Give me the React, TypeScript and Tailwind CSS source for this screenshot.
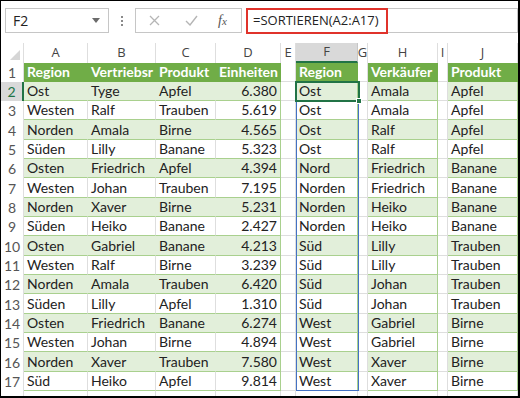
import React from 'react'

const colWidths = ['w-[64px]', 'w-[68px]', 'w-[60px]', 'w-[65px]', 'w-[15px]', 'w-[62px]', 'w-[10px]', 'w-[70px]', 'w-[10px]', 'w-[70px]']
const colLetters = ['A', 'B', 'C', 'D', 'E', 'F', 'G', 'H', 'I', 'J']
// which columns belong to a table, and which are the last column of their table
const inTable = [true, true, true, true, false, true, false, true, false, true]
const lastOfTable = [false, false, false, true, false, true, false, true, false, true]
const numeric = [false, false, false, true, false, false, false, false, false, false]

const left = [
  ['Ost', 'Tyge', 'Apfel', '6.380'],
  ['Westen', 'Ralf', 'Trauben', '5.619'],
  ['Norden', 'Amala', 'Birne', '4.565'],
  ['Süden', 'Lilly', 'Banane', '5.323'],
  ['Osten', 'Friedrich', 'Apfel', '4.394'],
  ['Westen', 'Johan', 'Trauben', '7.195'],
  ['Norden', 'Xaver', 'Birne', '5.231'],
  ['Süden', 'Heiko', 'Banane', '2.427'],
  ['Osten', 'Gabriel', 'Banane', '4.213'],
  ['Westen', 'Ralf', 'Birne', '3.239'],
  ['Norden', 'Amala', 'Trauben', '6.420'],
  ['Süden', 'Lilly', 'Apfel', '1.310'],
  ['Osten', 'Friedrich', 'Banane', '6.274'],
  ['Westen', 'Johan', 'Birne', '4.894'],
  ['Norden', 'Xaver', 'Trauben', '7.580'],
  ['Süd', 'Heiko', 'Apfel', '9.814'],
]
const regions = ['Ost', 'Ost', 'Ost', 'Ost', 'Nord', 'Norden', 'Norden', 'Norden', 'Süd', 'Süd', 'Süd', 'Süd', 'West', 'West', 'West', 'West']
const sellers = ['Amala', 'Amala', 'Ralf', 'Ralf', 'Friedrich', 'Friedrich', 'Heiko', 'Heiko', 'Lilly', 'Lilly', 'Johan', 'Johan', 'Gabriel', 'Gabriel', 'Xaver', 'Xaver']
const products = ['Apfel', 'Apfel', 'Apfel', 'Apfel', 'Banane', 'Banane', 'Banane', 'Banane', 'Trauben', 'Trauben', 'Trauben', 'Trauben', 'Birne', 'Birne', 'Birne', 'Birne']

const rows: string[][] = [
  ['Region', 'Vertriebsr', 'Produkt', 'Einheiten', '', 'Region', '', 'Verkäufer', '', 'Produkt'],
  ...left.map((r, i) => [...r, '', regions[i], '', sellers[i], '', products[i]]),
]

function cellClass(row: number, col: number) {
  const table = inTable[col]
  if (table && row === 1) {
    return 'bg-[#70AD47] text-white font-bold border-r border-b border-r-[#70AD47] border-b-[#70AD47]'
  }
  if (table && row % 2 === 0) {
    return lastOfTable[col]
      ? 'bg-[#E2EFDA] border-r border-b border-r-[#A9D08E] border-b-[#A9D08E]'
      : 'bg-[#E2EFDA] border-r border-b border-r-[#E2EFDA] border-b-[#A9D08E]'
  }
  if (table) {
    return lastOfTable[col]
      ? 'bg-white border-r border-b border-r-[#A9D08E] border-b-[#A9D08E]'
      : 'bg-white border-r border-b border-r-[#dedede] border-b-[#A9D08E]'
  }
  return 'bg-white border-r border-b border-r-[#dedede] border-b-[#dedede]'
}

export default function App() {
  return (
    <div className="w-[520px] h-[398px] overflow-hidden bg-white border-t border-l border-r-2 border-b-2 border-black font-['Lato',sans-serif] text-[#222]">
      {/* Formula bar */}
      <div className="h-[42px] flex items-start pt-[7px] pl-[4px]">
        <div className="w-[104px] h-[25px] border border-[#c6c6c6] flex items-center justify-between pl-[7px] pr-[8px] font-['Open_Sans',sans-serif] text-[14px] text-[#222]">
          <span>F2</span>
          <svg width="8" height="5" viewBox="0 0 8 5"><path d="M0 0h8L4 5z" fill="#6b6b6b" /></svg>
        </div>
        <div className="w-[26px] h-[25px] flex flex-col items-center justify-center gap-[2px]">
          <span className="w-[2px] h-[2px] bg-[#8a8a8a]"></span>
          <span className="w-[2px] h-[2px] bg-[#8a8a8a]"></span>
          <span className="w-[2px] h-[2px] bg-[#8a8a8a]"></span>
        </div>
        <div className="w-[107px] h-[25px] border border-[#c6c6c6] flex items-center pl-[13px]">
          <svg width="11" height="11" viewBox="0 0 11 11"><path d="M1 1l9 9M10 1l-9 9" stroke="#b5b5b5" strokeWidth="1.3" /></svg>
          <svg className="ml-[25px]" width="13" height="11" viewBox="0 0 13 11"><path d="M1 6l4 4 7-9" stroke="#b5b5b5" strokeWidth="1.4" fill="none" /></svg>
          <span className="ml-[20px] font-['Liberation_Serif',serif] italic text-[14px] text-[#555]">f<span className="text-[11px]">x</span></span>
        </div>
        <div className="relative ml-[4px] flex-1 h-[25px] border border-[#c6c6c6] flex items-center pl-[6px] font-['Open_Sans',sans-serif] text-[13px] text-[#222]">
          =SORTIEREN(A2:A17)
          <div className="absolute -left-[1px] -top-[1px] w-[142px] h-[26px] border-2 border-[#e0332b]"></div>
        </div>
      </div>

      {/* Grid */}
      <div className="relative">
        {/* column headers */}
        <div className="flex h-[19.5px]">
          <div className="w-[23px] shrink-0 border-r border-[#dedede] flex items-end justify-end pr-[3px] pb-[3px]">
            <svg width="10" height="10" viewBox="0 0 10 10"><path d="M10 0v10H0z" fill="#d6d6d6" /></svg>
          </div>
          {colLetters.map((l, i) =>
            l === 'F' ? (
              <div key={l} className={`${colWidths[i]} shrink-0 bg-[#d9d9d9] border-r border-r-[#c6c6c6] border-b-2 border-b-[#217346] flex items-center justify-center text-[13px] text-[#444] font-['Open_Sans',sans-serif]`}>
                {l}
              </div>
            ) : (
              <div key={l} className={`${colWidths[i]} shrink-0 border-r border-[#dedede] flex items-center justify-center text-[13px] text-[#444] font-['Open_Sans',sans-serif]`}>
                {l}
              </div>
            )
          )}
        </div>

        {rows.map((cells, ri) => {
          const row = ri + 1
          return (
            <div key={row} className="flex h-[19.33px]">
              {row === 2 ? (
                <div className="w-[23px] shrink-0 bg-[#d9d9d9] border-r-2 border-[#217346] flex items-center justify-center text-[14px] text-[#217346]">{row}</div>
              ) : (
                <div className="w-[23px] shrink-0 border-r border-[#dedede] flex items-center justify-center text-[14px] text-[#555]">{row}</div>
              )}
              {cells.map((v, ci) => (
                <div
                  key={ci}
                  className={`${colWidths[ci]} ${cellClass(row, ci)} shrink-0 overflow-hidden whitespace-nowrap text-[14px] leading-[18px] ${row === 1 ? 'pl-[3px] pr-[1px]' : 'px-[3px]'} flex items-center ${numeric[ci] && row > 1 ? 'justify-end' : 'justify-start'}`}
                >
                  {v}
                </div>
              ))}
            </div>
          )
        })}
        {/* row 18, partly visible */}
        <div className="flex h-[19.33px]">
          <div className="w-[23px] shrink-0 border-r border-[#dedede]"></div>
          {colWidths.map((w, ci) => (
            <div key={ci} className={`${w} shrink-0 border-r border-[#dedede]`}></div>
          ))}
        </div>

        {/* spill range border */}
        <div className="absolute left-[295px] top-[38.83px] w-[63px] h-[309.3px] border border-[#4472c4] pointer-events-none"></div>
        {/* active cell */}
        <div className="absolute left-[294px] top-[37.5px] w-[65px] h-[21.5px] border-2 border-[#217346] pointer-events-none">
          <div className="absolute -right-[4px] -bottom-[4px] w-[6px] h-[6px] bg-[#217346] border border-white"></div>
        </div>
      </div>
    </div>
  )
}
